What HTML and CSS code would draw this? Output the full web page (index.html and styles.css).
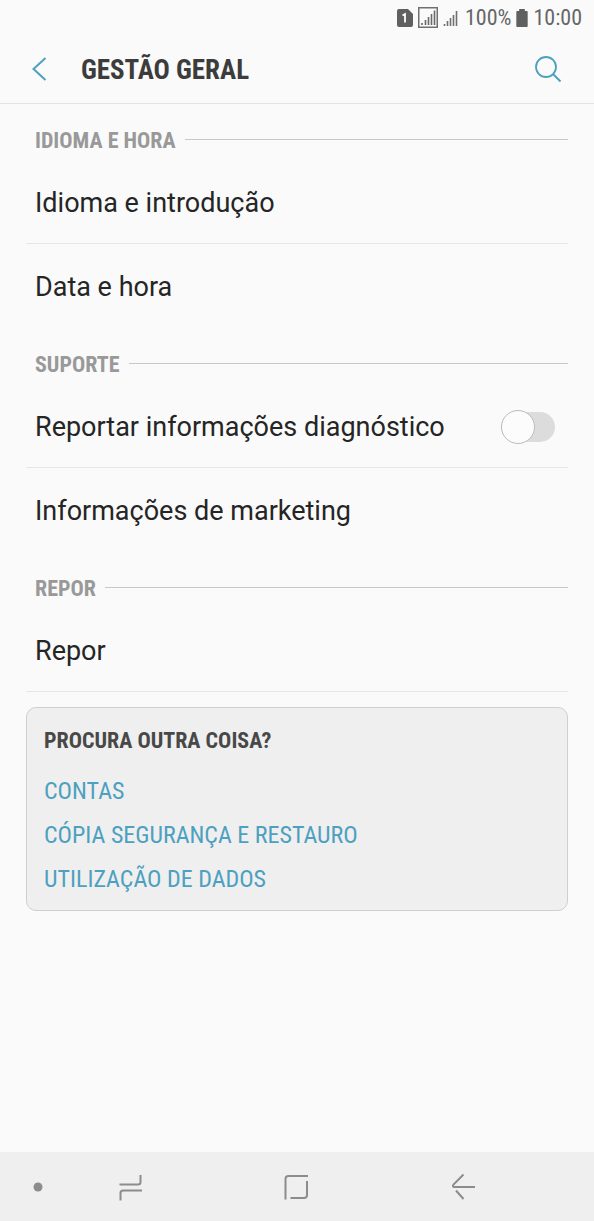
FILE: index.html
```html
<!DOCTYPE html>
<html lang="pt">
<head>
<meta charset="utf-8">
<meta name="viewport" content="width=device-width, initial-scale=1">
<title>Gestão geral</title>
<link rel="stylesheet" href="styles.css">
</head>
<body>
<div class="status">
  <svg width="16" height="18" viewBox="0 0 16 18" aria-hidden="true"><path d="M2 0H11L16 5V16Q16 18 14 18H2Q0 18 0 16V2Q0 0 2 0Z" fill="#606060"/><path d="M5.500 6.500L8 5V13.500" fill="none" stroke="#fff" stroke-width="1.800"/></svg>
  <svg width="20" height="21" viewBox="0 0 20 21" aria-hidden="true"><rect x=".75" y=".75" width="18.500" height="19.500" fill="none" stroke="#707070" stroke-width="1.500"/><path d="M4 18V16M7.500 18V13M10.500 18V10M13.500 18V7M16.500 18V3.500" stroke="#686868" stroke-width="1.600"/></svg>
  <svg width="15" height="16" viewBox="0 0 15 16" aria-hidden="true"><path d="M1.500 16V14M4.500 16V11M7.500 16V8M10.500 16V5M13.500 16V1" stroke="#707070" stroke-width="1.600"/></svg>
  <span class="battery-level">100%</span>
  <svg width="12" height="18" viewBox="0 0 12 19" aria-hidden="true"><path d="M3 0H9V2H11Q12 2 12 3V18Q12 19 11 19H1Q0 19 0 18V3Q0 2 1 2H3Z" fill="#606060"/></svg>
  <span>10:00</span>
</div>
<header class="header">
  <button class="icon-button" type="button" aria-label="Voltar"><svg width="28" height="28" viewBox="0 0 28 28"><path d="M19.500 3L7.500 14L19.500 25" fill="none" stroke="#4da0bf" stroke-width="2"/></svg></button>
  <h1 class="title">GESTÃO GERAL</h1>
  <button class="icon-button" type="button" aria-label="Pesquisar"><svg width="28" height="28" viewBox="0 0 28 28"><circle cx="12" cy="12" r="10" fill="none" stroke="#4da0bf" stroke-width="1.800"/><path d="M19 19L26.500 26.500" stroke="#4da0bf" stroke-width="2"/></svg></button>
</header>
<main class="content">
  <section>
    <h2 class="section-title">IDIOMA E HORA</h2>
    <a class="row" href="#idioma">Idioma e introdução</a>
    <a class="row" href="#data">Data e hora</a>
  </section>
  <section>
    <h2 class="section-title">SUPORTE</h2>
    <label class="row">Reportar informações diagnóstico <input class="switch" type="checkbox" role="switch"></label>
    <a class="row" href="#marketing">Informações de marketing</a>
  </section>
  <section class="section-last">
    <h2 class="section-title">REPOR</h2>
    <a class="row" href="#repor">Repor</a>
  </section>
  <aside class="card">
    <h2 class="card-title">PROCURA OUTRA COISA?</h2>
    <a class="card-link" href="#contas">CONTAS</a>
    <a class="card-link" href="#copia">CÓPIA SEGURANÇA E RESTAURO</a>
    <a class="card-link" href="#dados">UTILIZAÇÃO DE DADOS</a>
  </aside>
</main>
<nav class="nav">
  <button class="nav-dot" type="button" aria-label="Ocultar barra"><svg width="10" height="10" viewBox="0 0 10 10"><circle cx="5" cy="5" r="4.500" fill="#8c8c8c"/></svg></button>
  <button class="nav-key" type="button" aria-label="Recentes"><svg width="26" height="28" viewBox="0 0 26 28"><path d="M1.500 11.500H20Q22.500 11.500 22.500 9V2M24 17.500H5Q2.500 17.500 2.500 20V27.500" fill="none" stroke="#8c8c8c" stroke-width="2"/></svg></button>
  <button class="nav-key" type="button" aria-label="Início"><svg width="26" height="28" viewBox="0 0 26 28"><path d="M1.500 26.500V6Q1.500 3 4.500 3H24M23 8V22Q23 25 20 25H6.500" fill="none" stroke="#8c8c8c" stroke-width="2"/></svg></button>
  <button class="nav-key" type="button" aria-label="Anterior"><svg width="26" height="28" viewBox="0 0 26 28"><path d="M13.500 1.500L3.500 11.500Q2 14 4.500 14H25M6 17.500L13.500 26" fill="none" stroke="#8c8c8c" stroke-width="2"/></svg></button>
</nav>
</body>
</html>
```

FILE: styles.css
```css
* { box-sizing: border-box; }
body {
  margin: 0;
  min-height: 100vh;
  display: flex;
  flex-direction: column;
  background: #fafafa;
  color: #252525;
  font-family: "Roboto", sans-serif;
}
h1, h2 { margin: 0; }
a { color: inherit; text-decoration: none; }
button { border: 0; padding: 0; background: none; display: grid; place-items: center; }
svg { display: block; flex: none; }
.status {
  display: flex;
  align-items: center;
  justify-content: flex-end;
  gap: 5px;
  height: 35px;
  padding-right: 12px;
  color: #666;
  font: 22px "Roboto Condensed", "Roboto", sans-serif;
}
.battery-level { padding-left: 2px; }
.header {
  display: flex;
  align-items: center;
  height: 69px;
  padding: 0 32px 0 26px;
  border-bottom: 1px solid #e4e4e4;
}
.icon-button { width: 28px; height: 28px; }
.title {
  flex: 1;
  padding: 2px 0 0 27px;
  color: #3c3c3c;
  font: 700 27px "Roboto Condensed", "Roboto", sans-serif;
}
.content { flex: 1; padding: 0 26px; }
.section-title {
  display: flex;
  align-items: center;
  gap: 9px;
  height: 56px;
  padding: 17px 0 0 9px;
  color: #999;
  font: 700 22px "Roboto Condensed", "Roboto", sans-serif;
}
.section-title::after { content: ""; flex: 1; margin-bottom: 2px; border-top: 1px solid #c8c8c8; }
.row {
  display: flex;
  align-items: center;
  justify-content: space-between;
  height: 84px;
  padding: 2px 13px 0 9px;
  font-size: 27px;
}
.row:not(:last-child), .section-last .row { border-bottom: 1px solid #e6e6e6; }
.switch {
  appearance: none;
  display: flex;
  align-items: center;
  width: 54px;
  height: 30px;
  margin: 0;
  border-radius: 15px;
  background: #dcdcdc;
}
.switch::before {
  content: "";
  flex: none;
  width: 32px;
  height: 32px;
  border: 1px solid #bcbcbc;
  border-radius: 50%;
  background: #fcfcfc;
}
.switch:checked { justify-content: flex-end; background: #4da0bf; }
.card {
  margin-top: 15px;
  padding: 11px 17px 9px;
  border: 1px solid #cfcfcf;
  border-radius: 10px;
  background: #efefef;
}
.card-title {
  margin-bottom: 6px;
  color: #484848;
  font: 700 22px/44px "Roboto Condensed", "Roboto", sans-serif;
}
.card-link {
  display: block;
  color: #4da0bf;
  font: 24px/44px "Roboto Condensed", "Roboto", sans-serif;
}
.nav {
  display: flex;
  align-items: center;
  height: 69px;
  background: #efefef;
}
.nav-dot { width: 75px; height: 69px; margin-right: -27px; }
.nav-key { flex: 1; height: 69px; }
.nav::after { content: ""; width: 48px; }
```
